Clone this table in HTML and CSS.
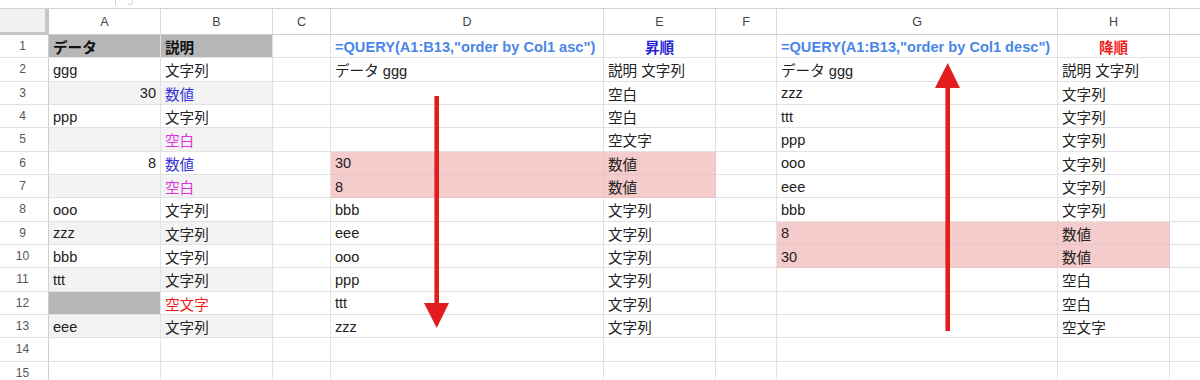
FILE: index.html
```html
<!DOCTYPE html>
<html lang="ja">
<head>
<meta charset="utf-8">
<title>QUERY order by</title>
<link rel="stylesheet" href="styles.css">
</head>
<body>
<div class="page">
  <div class="toolbar"><span class="tick"></span><span class="hook"></span></div>
  <div class="sheet">
    <div class="corner"></div>
    <div class="ch">A</div><div class="ch">B</div><div class="ch">C</div><div class="ch">D</div><div class="ch">E</div><div class="ch">F</div><div class="ch">G</div><div class="ch">H</div><div class="ch last"></div>

    <div class="rh">1</div>
    <div class="c hd b">データ</div><div class="c hd b">説明</div><div class="c"></div>
    <div class="c f">=QUERY(A1:B13,"order by Col1 asc")</div><div class="c asc">昇順</div><div class="c"></div>
    <div class="c f">=QUERY(A1:B13,"order by Col1 desc")</div><div class="c desc">降順</div><div class="c last"></div>

    <div class="rh">2</div>
    <div class="c">ggg</div><div class="c">文字列</div><div class="c"></div>
    <div class="c">データ ggg</div><div class="c">説明 文字列</div><div class="c"></div>
    <div class="c">データ ggg</div><div class="c">説明 文字列</div><div class="c last"></div>

    <div class="rh">3</div>
    <div class="c band r">30</div><div class="c band blue">数値</div><div class="c"></div>
    <div class="c"></div><div class="c">空白</div><div class="c"></div>
    <div class="c">zzz</div><div class="c">文字列</div><div class="c last"></div>

    <div class="rh">4</div>
    <div class="c">ppp</div><div class="c">文字列</div><div class="c"></div>
    <div class="c"></div><div class="c">空白</div><div class="c"></div>
    <div class="c">ttt</div><div class="c">文字列</div><div class="c last"></div>

    <div class="rh">5</div>
    <div class="c band"></div><div class="c band mag">空白</div><div class="c"></div>
    <div class="c"></div><div class="c">空文字</div><div class="c"></div>
    <div class="c">ppp</div><div class="c">文字列</div><div class="c last"></div>

    <div class="rh">6</div>
    <div class="c r">8</div><div class="c blue">数値</div><div class="c"></div>
    <div class="c pink">30</div><div class="c pink">数値</div><div class="c"></div>
    <div class="c">ooo</div><div class="c">文字列</div><div class="c last"></div>

    <div class="rh">7</div>
    <div class="c band"></div><div class="c band mag">空白</div><div class="c"></div>
    <div class="c pink">8</div><div class="c pink">数値</div><div class="c"></div>
    <div class="c">eee</div><div class="c">文字列</div><div class="c last"></div>

    <div class="rh">8</div>
    <div class="c">ooo</div><div class="c">文字列</div><div class="c"></div>
    <div class="c">bbb</div><div class="c">文字列</div><div class="c"></div>
    <div class="c">bbb</div><div class="c">文字列</div><div class="c last"></div>

    <div class="rh">9</div>
    <div class="c band">zzz</div><div class="c band">文字列</div><div class="c"></div>
    <div class="c">eee</div><div class="c">文字列</div><div class="c"></div>
    <div class="c pink">8</div><div class="c pink">数値</div><div class="c last"></div>

    <div class="rh">10</div>
    <div class="c">bbb</div><div class="c">文字列</div><div class="c"></div>
    <div class="c">ooo</div><div class="c">文字列</div><div class="c"></div>
    <div class="c pink">30</div><div class="c pink">数値</div><div class="c last"></div>

    <div class="rh">11</div>
    <div class="c band">ttt</div><div class="c band">文字列</div><div class="c"></div>
    <div class="c">ppp</div><div class="c">文字列</div><div class="c"></div>
    <div class="c"></div><div class="c">空白</div><div class="c last"></div>

    <div class="rh">12</div>
    <div class="c hd"></div><div class="c red">空文字</div><div class="c"></div>
    <div class="c">ttt</div><div class="c">文字列</div><div class="c"></div>
    <div class="c"></div><div class="c">空白</div><div class="c last"></div>

    <div class="rh">13</div>
    <div class="c band">eee</div><div class="c band">文字列</div><div class="c"></div>
    <div class="c">zzz</div><div class="c">文字列</div><div class="c"></div>
    <div class="c"></div><div class="c">空文字</div><div class="c last"></div>

    <div class="rh">14</div>
    <div class="c"></div><div class="c"></div><div class="c"></div>
    <div class="c"></div><div class="c"></div><div class="c"></div>
    <div class="c"></div><div class="c"></div><div class="c last"></div>

    <div class="rh">15</div>
    <div class="c"></div><div class="c"></div><div class="c"></div>
    <div class="c"></div><div class="c"></div><div class="c"></div>
    <div class="c"></div><div class="c"></div><div class="c last"></div>
  </div>

  <svg class="arrows" width="1200" height="380" viewBox="0 0 1200 380" aria-hidden="true">
    <rect x="434.4" y="96" width="4.6" height="210" fill="#e21d1d"/>
    <polygon points="424,303 449,303 436.7,328" fill="#e21d1d"/>
    <rect x="945.4" y="86" width="4.6" height="245" fill="#e21d1d"/>
    <polygon points="935,88 960,88 947.7,63" fill="#e21d1d"/>
  </svg>
</div>
</body>
</html>
```

FILE: styles.css
```css
html, body {
  margin: 0;
  padding: 0;
  background: #ffffff;
}

.page {
  position: relative;
  width: 1200px;
  height: 380px;
  overflow: hidden;
  font-family: "Liberation Sans", "Noto Sans CJK JP", sans-serif;
  color: #222222;
}

.toolbar {
  height: 9px;
  border-bottom: 1px solid #d4d4d4;
  box-sizing: border-box;
  display: flex;
  align-items: flex-start;
  gap: 12px;
  padding-left: 115px;
}

.toolbar .tick {
  width: 1px;
  height: 5px;
  background: #cfcfcf;
}

.toolbar .hook {
  width: 4px;
  height: 4px;
  border-right: 1px solid #d6d6d6;
  border-bottom: 1px solid #d6d6d6;
  border-bottom-right-radius: 3px;
}

.sheet {
  display: grid;
  grid-template-columns: 49px 112px 112px 58px 273px 112px 61px 281px 112px 1fr;
  grid-template-rows: 26px repeat(15, 23.33px);
}

.corner {
  background: #f1f1f1;
  border-right: 4px solid #c6c6c6;
  border-bottom: 3px solid #c6c6c6;
}

.ch {
  display: flex;
  align-items: center;
  justify-content: center;
  font-size: 12.5px;
  color: #444444;
  background: #ffffff;
  border-right: 1px solid #d9d9d9;
  border-bottom: 1px solid #cfcfcf;
  box-sizing: border-box;
}

.rh {
  display: flex;
  align-items: center;
  justify-content: center;
  font-size: 12px;
  color: #555555;
  background: #ffffff;
  border-right: 1px solid #cfcfcf;
  border-bottom: 1px solid #e2e2e2;
  box-sizing: border-box;
  padding-right: 3px;
}

.c {
  display: flex;
  align-items: center;
  padding: 1px 4px 0 4px;
  font-size: 14.6px;
  white-space: nowrap;
  overflow: visible;
  border-right: 1px solid #e2e2e2;
  border-bottom: 1px solid #e2e2e2;
  box-sizing: border-box;
  min-width: 0;
}

.last {
  border-right: none;
}

.hd {
  background: #b7b7b7;
}

.band {
  background: #f3f3f3;
}

.pink {
  background: #f4cccc;
  border-bottom-color: #e9c3c3;
  border-right-color: #ecc6c6;
}

.b {
  font-weight: bold;
  color: #111111;
}

.r {
  justify-content: flex-end;
}

.f {
  font-weight: bold;
  color: #4a86e8;
}

.asc {
  font-weight: bold;
  color: #2323d4;
  justify-content: center;
}

.desc {
  font-weight: bold;
  color: #ee1c1c;
  justify-content: center;
}

.blue {
  color: #3333d6;
}

.mag {
  color: #e033e0;
}

.red {
  color: #f01818;
}

.arrows {
  position: absolute;
  left: 0;
  top: 0;
  pointer-events: none;
}
```
